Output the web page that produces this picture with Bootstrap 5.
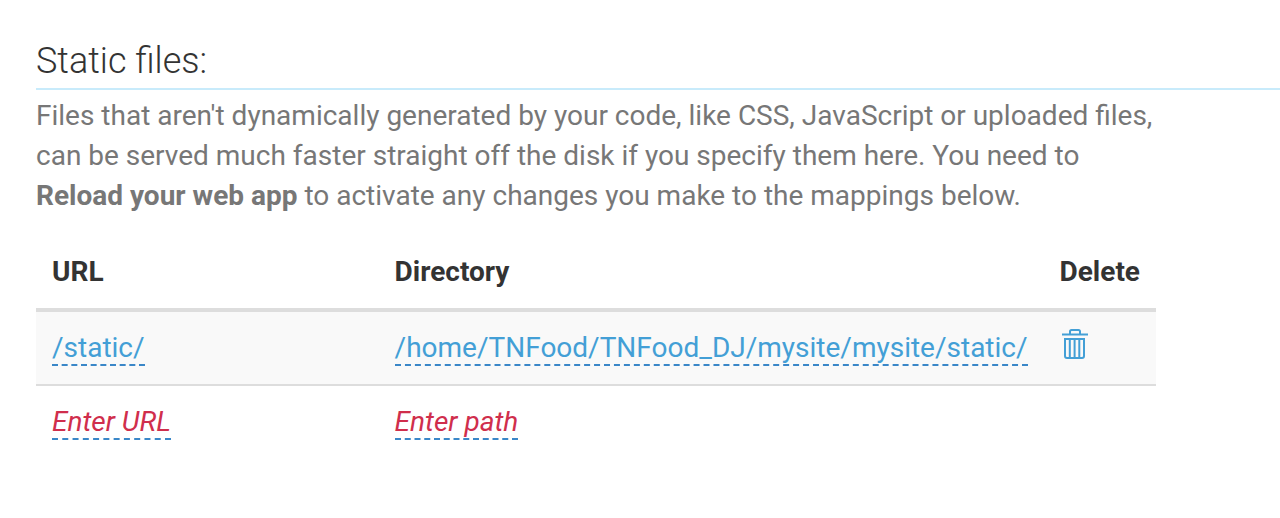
<!DOCTYPE html>
<html lang="en">
<head>
<meta charset="utf-8">
<meta name="viewport" content="width=device-width, initial-scale=1">
<title>Static files</title>
<link rel="stylesheet" href="https://cdn.jsdelivr.net/npm/bootstrap@5.3.0/dist/css/bootstrap.min.css">
<style>
body { font-family: Roboto, "Liberation Sans", sans-serif; font-size: 28px; line-height: 40px; color: #333; }
.static-section { padding: 36px 0 36px 36px; }
.section-title { font-size: 36px; font-weight: 300; line-height: 50px; padding-bottom: 2px; border-bottom: 2px solid #c8ebfb; color: #333; }
.intro { color: #777; padding-top: 6px; margin-bottom: 20px; max-width: 1120px; }
.mappings { max-width: 1120px; color: #333; --bs-table-color: #333; --bs-table-striped-color: #333; --bs-table-striped-bg: #f9f9f9; }
.mappings > :not(caption) > * > * { padding: 16px; border-bottom: 0; }
.mappings > thead > tr > th { border-bottom: 4px solid #ddd; }
.mappings tbody tr + tr td { border-top: 2px solid #ddd; }
.editable { color: #439fd6; text-decoration: none; border-bottom: 2px dashed #3a87c8; }
.editable-empty { color: #d02e4c; font-style: italic; }
.col-url { width: 344px; }
.col-delete { width: 112px; }
.trash-btn, .trash-btn:hover { color: #439fd6; }
</style>
</head>
<body>
<main class="static-section">
<h2 class="section-title mb-0">Static files:</h2>
<p class="intro">Files that aren't dynamically generated by your code, like CSS, JavaScript or uploaded files, can be served much faster straight off the disk if you specify them here. You need to <strong>Reload your web app</strong> to activate any changes you make to the mappings below.</p>
<table class="table table-striped mappings">
<thead><tr><th class="col-url" scope="col">URL</th><th scope="col">Directory</th><th class="col-delete" scope="col">Delete</th></tr></thead>
<tbody>
<tr><td><a class="editable" href="#">/static/</a></td><td><a class="editable" href="#">/home/TNFood/TNFood_DJ/mysite/mysite/static/</a></td><td><button class="btn d-block p-0 border-0 trash-btn" type="button" aria-label="Delete"><svg class="d-block" width="30" height="32" viewBox="0 0 30 32" fill="none" stroke="currentColor" stroke-width="2"><path d="M2 6.6h26M10 6V3.5q0-1.5 1.500-1.500h7q1.500 0 1.500 1.500V6"/><path d="M5 11h19v17q0 2-2 2H7q-2 0-2-2zM9.800 11v19M14.600 11v19M19.300 11v19"/></svg></button></td></tr>
<tr><td><a class="editable editable-empty" href="#">Enter URL</a></td><td><a class="editable editable-empty" href="#">Enter path</a></td><td></td></tr>
</tbody>
</table>
</main>
<script src="https://cdn.jsdelivr.net/npm/bootstrap@5.3.0/dist/js/bootstrap.bundle.min.js"></script>
</body>
</html>
